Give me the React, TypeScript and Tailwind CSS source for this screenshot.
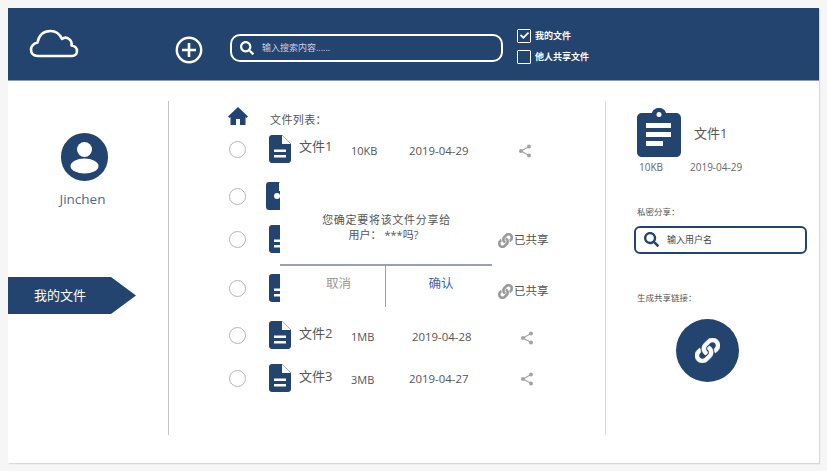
import React from "react";
import { FaSearch, FaCheck, FaLink } from "react-icons/fa";

const navy = "#23446f";

const FileIcon = ({ shared }: { shared?: boolean }) => (
  <svg width="22" height="28" viewBox="0 0 22 28" className="shrink-0">
    <path d="M3 0H13V9H22V25C22 26.700 20.700 28 19 28H3C1.300 28 0 26.700 0 25V3C0 1.300 1.300 0 3 0Z" fill="#23446f" />
    <path d="M13 0L22 9" stroke="#23446f" strokeWidth="0.7" opacity="0.6" />
    {shared ? (
      <circle cx="11" cy="14" r="3" fill="#fff" />
    ) : (
      <>
        <rect x="5" y="14.500" width="12" height="2.500" fill="#fff" />
        <rect x="5" y="20" width="12" height="2.500" fill="#fff" />
      </>
    )}
  </svg>
);

const ShareIcon = () => (
  <svg width="14" height="14" viewBox="0 0 14 14" className="shrink-0">
    <path d="M11 2.500L3 7L11 11.500" fill="none" stroke="#a3a3a3" strokeWidth="1.100" />
    <circle cx="11" cy="2.500" r="2" fill="#a3a3a3" />
    <circle cx="3" cy="7" r="2" fill="#a3a3a3" />
    <circle cx="11" cy="11.500" r="2" fill="#a3a3a3" />
  </svg>
);

const rows = [
  { id: 1, top: "mt-[9px]", name: "文件1", nameCls: "mb-[4px]", size: "10KB", date: "2019-04-29", dateCls: "w-[109px] ml-[30px] mt-[4px]", shareCls: "mt-[4px]" },
  { id: 2, top: "mt-[19px]", shifted: true },
  { id: 3, top: "mt-[15px]", linkCls: "mt-[2px]" },
  { id: 4, top: "mt-[21px]", linkCls: "mt-[6px]" },
  { id: 5, top: "mt-[19px]", name: "文件2", nameCls: "mb-[2px]", size: "1MB", date: "2019-04-28", dateCls: "w-[108px] ml-[33px] mt-[4px]", shareCls: "mt-[6px]" },
  { id: 6, top: "mt-[15px]", name: "文件3", nameCls: "mb-[2px]", size: "3MB", date: "2019-04-27", dateCls: "w-[111px] ml-[30px] mt-[2px]", shareCls: "mt-[2px]" },
];

const App = () => {
  return (
    <div className="w-[827px] h-[471px] overflow-hidden bg-[#f6f6f6] p-2 font-['Open_Sans','Noto_Sans_CJK_SC',sans-serif]">
      <div className="w-[811px] h-[455px] bg-white shadow-[1px_1px_1px_#d8d8d8]">
        {/* top bar */}
        <div className="h-[73px] bg-[#23446f] border-b border-[#8d97a8] flex items-center">
          <svg width="50" height="29" viewBox="0 0 50 29" className="ml-[21px] mb-[2px] shrink-0">
            <path
              d="M9 27C4 27 2 24 2 20.500C2 17 5 14 8.500 13.500C10 6 15 2 21.500 2C27 2 31 5.500 33 10C35 8.500 38 8.500 40 10C42 11.500 43 14 42.500 16.500C46 17 48 19.500 48 22C48 25 46 27 43 27Z"
              fill="none"
              stroke="#fff"
              strokeWidth="2.600"
              strokeLinejoin="round"
            />
          </svg>
          <svg width="28" height="28" viewBox="0 0 28 28" className="ml-[96px] mt-[12px] shrink-0">
            <circle cx="14" cy="14" r="12.200" fill="none" stroke="#fff" strokeWidth="2.400" />
            <path d="M14 7V21M7 14H21" stroke="#fff" strokeWidth="2.600" />
          </svg>
          <div className="ml-[27px] mt-[7px] w-[273px] h-[28px] border-2 border-white rounded-[10px] flex items-center pl-[8px]">
            <FaSearch size={14} color="#fff" />
            <span className="ml-[8px] text-[9px] text-[#c9cfe8]">输入搜索内容......</span>
          </div>
          <div className="ml-[14px] mt-[4px] flex flex-col gap-[7px]">
            <div className="flex items-center">
              <div className="w-[14px] h-[14px] border border-white flex items-center justify-center rounded-[1px]">
                <FaCheck size={9} color="#fff" />
              </div>
              <span className="ml-[4px] text-[9px] font-bold text-white">我的文件</span>
            </div>
            <div className="flex items-center">
              <div className="w-[14px] h-[14px] border border-white rounded-[1px]" />
              <span className="ml-[4px] text-[9px] font-bold text-white">他人共享文件</span>
            </div>
          </div>
        </div>

        <div className="flex mt-[20px] h-[334px]">
          {/* sidebar */}
          <div className="w-[161px] border-r border-[#c4c4c4] flex flex-col">
            <div className="ml-[53px] mt-[32px] w-[47px] h-[48px] rounded-full bg-[#23446f] overflow-hidden shrink-0">
              <svg width="47" height="48" viewBox="0 0 47 48">
                <circle cx="23.500" cy="16.500" r="7.500" fill="#fff" />
                <ellipse cx="23.500" cy="33" rx="14" ry="7.500" fill="#fff" />
              </svg>
            </div>
            <div className="mt-[9px] ml-[-11px] text-center text-[13.500px] leading-[18px] text-[#4d6a8e]">Jinchen</div>
            <div className="mt-[69px] w-[128px] h-[37px] bg-[#23446f] [clip-path:polygon(0_0,103px_0,100%_50%,103px_100%,0_100%)] flex items-center pl-[26px] text-[13px] text-white">
              我的文件
            </div>
          </div>

          {/* file list */}
          <div className="w-[437px] border-r border-[#d8d8d8] relative">
            <div className="flex items-center ml-[59px] mt-[5px] h-[20px]">
              <svg width="20" height="18" viewBox="0 0 20 18" className="shrink-0">
                <path d="M10 0L20 9.500L18.500 11L17.500 10V18H12V12H8V18H2.500V10L1.500 11L0 9.500Z" fill="#23446f" />
              </svg>
              <span className="ml-[22px] mt-[9px] text-[11px] tracking-[0.4px] text-[#555]">文件列表：</span>
            </div>
            {rows.map((row) => (
              <div key={row.id} className={`${row.top} h-[28px] flex items-center text-[#555]`}>
                <div className="ml-[60px] w-[17px] h-[17px] rounded-full border border-[#b5b5b5] shrink-0" />
                <div className={row.shifted ? "ml-[20px]" : "ml-[23px]"}>
                  <FileIcon shared={row.shifted} />
                </div>
                {row.name && (
                  <>
                    <span className={`ml-[8px] w-[52px] ${row.nameCls} text-[13px] text-[#555]`}>{row.name}</span>
                    <span className="w-[28px] mt-[4px] text-[11px]">{row.size}</span>
                    <span className={`${row.dateCls} text-[11.4px]`}>{row.date}</span>
                    <div className={row.shareCls}>
                      <ShareIcon />
                    </div>
                  </>
                )}
                {row.linkCls && (
                  <div className={`${row.linkCls} ml-[207px] flex items-center text-[11.500px] text-[#555]`}>
                    <FaLink size={15} color="#999" stroke="#999" strokeWidth={12} className="mr-[1px] shrink-0" />
                    <span>已共享</span>
                  </div>
                )}
              </div>
            ))}

            {/* confirm dialog */}
            <div className="absolute left-[111px] top-[74px] w-[212px] h-[132px] bg-white flex flex-col text-[11px] text-[#555]">
              <div className="h-[91px] flex flex-col items-center pt-[37px] pl-[1px] leading-[15px] tracking-[0.7px] border-b-2 border-[#9a9fb5]">
                <span>您确定要将该文件分享给</span>
                <span className="mr-[6px] tracking-normal">用户： ***吗?</span>
              </div>
              <div className="flex flex-1 text-[12.500px]">
                <div className="w-[106px] border-r border-[#9a9fb5] text-center pt-[9px] pl-[12px] text-[#999]">取消</div>
                <div className="flex-1 text-center pt-[9px] pl-[4px] text-[#3e68a8]">确认</div>
              </div>
            </div>
          </div>

          {/* detail panel */}
          <div className="flex-1 pl-[31px] flex flex-col">
            <div className="flex items-center mt-[7px]">
              <svg width="44" height="49" viewBox="0 0 44 49" className="shrink-0">
                <path d="M5 5H15C15.500 2 18.500 0 22 0C25.500 0 28.500 2 29 5H39C41.800 5 44 7 44 10V44C44 47 41.800 49 39 49H5C2.200 49 0 47 0 44V10C0 7 2.200 5 5 5Z" fill="#23446f" />
                <circle cx="22" cy="6.500" r="2.500" fill="#fff" />
                <rect x="9" y="15" width="25" height="5" fill="#fff" />
                <rect x="9" y="24" width="25" height="5" fill="#fff" />
                <rect x="9" y="33" width="17" height="5" fill="#fff" />
              </svg>
              <span className="ml-[13px] mt-[2px] text-[13px] text-[#555]">文件1</span>
            </div>
            <div className="flex mt-[3px] ml-[2px] text-[10px] text-[#666]">
              <span className="w-[51px]">10KB</span>
              <span>2019-04-29</span>
            </div>
            <div className="mt-[31px] text-[8.500px] text-[#555]">私密分享：</div>
            <div className="mt-[7px] ml-[-3px] w-[173px] h-[28px] border-2 border-[#23446f] rounded-[6px] flex items-center pl-[8px]">
              <FaSearch size={15} color={navy} />
              <span className="ml-[8px] text-[9px] text-[#444]">输入用户名</span>
            </div>
            <div className="mt-[38px] text-[8.500px] text-[#555]">生成共享链接：</div>
            <div className="mt-[14px] ml-[39px] w-[63px] h-[63px] rounded-full bg-[#23446f] flex items-center justify-center">
              <FaLink size={25} color="#fff" stroke="#fff" strokeWidth={12} />
            </div>
          </div>
        </div>
      </div>
    </div>
  );
};

export default App;
